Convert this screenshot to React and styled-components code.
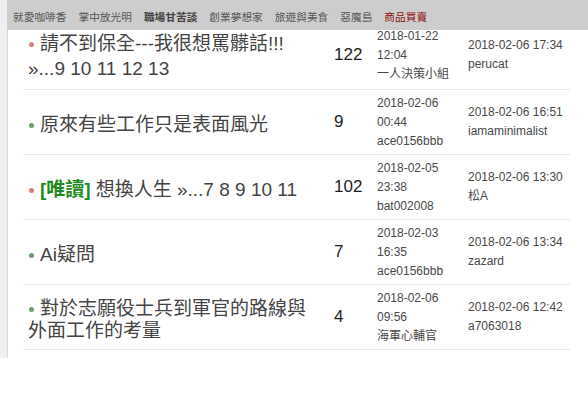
import React from 'react'
import styled, { createGlobalStyle } from 'styled-components';

const GlobalStyle = createGlobalStyle`
    body {
        margin: 0;
        background: #fff;
        font-family: "Liberation Sans", "Noto Sans CJK TC", sans-serif;
    }
`;

const Page = styled.div`
    background: #efefef;
    padding-left: 7px;
`;

const Main = styled.div`
    background: #fff;
    border-left: 1px solid #dadada;
    padding: 21px 18px 8px 15px;
`;

const Nav = styled.div`
    position: fixed;
    top: 0;
    left: 7px;
    right: 0;
    height: 30px;
    background: #cdcdcd;
    display: flex;
    align-items: center;
    gap: 12px;
    padding: 3px 0 0 6px;
    box-sizing: border-box;
    z-index: 5;
`;

const NavItem = styled.span`
    font-size: 10.7px;
    color: ${p => p.red ? '#8e0b0b' : p.bold ? '#444' : '#555'};
    font-weight: ${p => p.bold ? 'bold' : 'normal'};
    white-space: nowrap;
`;

const Row = styled.div`
    display: grid;
    grid-template-columns: 306px 43px 91px 1fr;
    align-items: center;
    min-height: 64px;
    padding-left: 5px;
    border-bottom: 1px solid #e6e6e6;
`;

const Title = styled.div`
    font-size: 19px;
    line-height: 22px;
    color: #444;
    padding: 12px 14px 6px 0;
`;

const Dot = styled.span`
    display: inline-block;
    width: 5px;
    height: 5px;
    border-radius: 50%;
    background: ${p => p.hot ? '#d77d7f' : '#6f9d6f'};
    margin: 0 6px 0 1px;
    vertical-align: middle;
`;

const Tag = styled.span`
    color: #1f8a1f;
    font-weight: bold;
    margin-right: 5px;
`;

const Pages = styled.span`
    display: inline-block;
    padding: 3px 0;
    white-space: nowrap;
`;

const Count = styled.div`
    font-size: 17px;
    color: #1e1e1e;
`;

const Meta = styled.div`
    font-size: 12px;
    line-height: 19px;
    color: #484848;
`;

const nav = [
    { t: '就愛咖啡香' },
    { t: '掌中放光明' },
    { t: '職場甘苦談', bold: true },
    { t: '創業夢想家' },
    { t: '旅遊與美食' },
    { t: '惡魔島' },
    { t: '商品買賣', red: true },
];

const topics = [
    { hot: true, title: '請不到保全---我很想罵髒話!!!', pages: '»...9 10 11 12 13', count: 122, date: '2018-01-22', time: '12:04', author: '一人決策小組', last: '2018-02-06 17:34', lastBy: 'perucat' },
    { title: '原來有些工作只是表面風光', count: 9, date: '2018-02-06', time: '00:44', author: 'ace0156bbb', last: '2018-02-06 16:51', lastBy: 'iamaminimalist' },
    { hot: true, tag: '[唯讀]', title: '想換人生', pages: '»...7 8 9 10 11', count: 102, date: '2018-02-05', time: '23:38', author: 'bat002008', last: '2018-02-06 13:30', lastBy: '松A' },
    { title: 'Ai疑問', count: 7, date: '2018-02-03', time: '16:35', author: 'ace0156bbb', last: '2018-02-06 13:34', lastBy: 'zazard' },
    { title: '對於志願役士兵到軍官的路線與外面工作的考量', count: 4, date: '2018-02-06', time: '09:56', author: '海軍心輔官', last: '2018-02-06 12:42', lastBy: 'a7063018' },
];

const App = () => {
  return (
    <>
        <GlobalStyle/>
        <Nav>
            {nav.map(n => <NavItem key={n.t} bold={n.bold} red={n.red}>{n.t}</NavItem>)}
        </Nav>
        <Page>
            <Main>
                {topics.map((t, i) => (
                    <Row key={i}>
                        <Title>
                            <Dot hot={t.hot}/>
                            {t.tag && <Tag>{t.tag}</Tag>}
                            {t.title}
                            {t.pages && <> <Pages>{t.pages}</Pages></>}
                        </Title>
                        <Count>{t.count}</Count>
                        <Meta>{t.date}<br/>{t.time}<br/>{t.author}</Meta>
                        <Meta>{t.last}<br/>{t.lastBy}</Meta>
                    </Row>
                ))}
            </Main>
        </Page>
    </>
  )
}

export default App
